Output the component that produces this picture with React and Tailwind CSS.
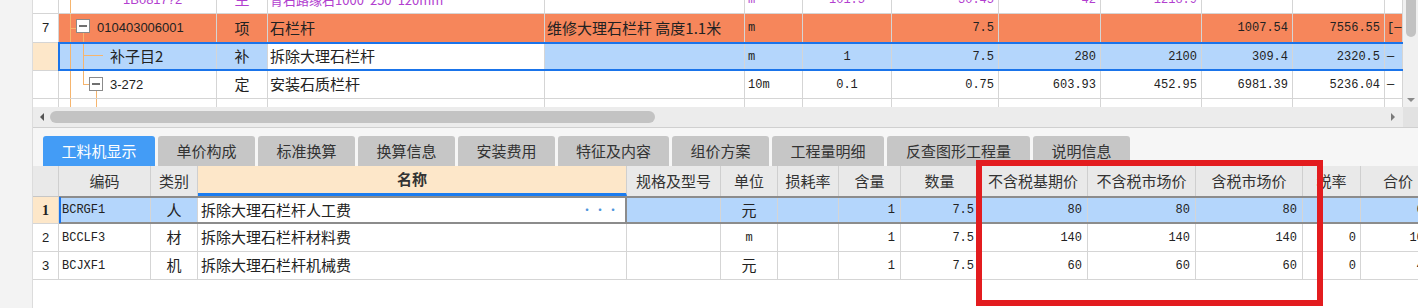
import React from 'react';

const CJK = "font-['Noto_Sans_CJK_SC','Liberation_Sans',sans-serif] text-[15px]";
const MONO = "font-['Liberation_Mono',monospace] text-[12px]";
const SANS = "font-['Liberation_Sans','Noto_Sans_CJK_SC',sans-serif] text-[13px]";
const PURPLE = 'text-[#b23fcf]';

// upper grid columns
const TOP = [
  { w: 'w-[26px]', a: 'justify-center', f: SANS },
  { w: 'w-[158px]', a: 'justify-start relative', f: SANS },
  { w: 'w-[51px]', a: 'justify-center', f: CJK },
  { w: 'w-[277px]', a: 'justify-start pl-[2px]', f: CJK },
  { w: 'w-[200px]', a: 'justify-start pl-[2px]', f: CJK },
  { w: 'w-[58px]', a: 'justify-start pl-[3px]', f: MONO },
  { w: 'w-[89px]', a: 'justify-center', f: MONO },
  { w: 'w-[107px]', a: 'justify-end pr-[4px]', f: MONO },
  { w: 'w-[102px]', a: 'justify-end pr-[4px]', f: MONO },
  { w: 'w-[101px]', a: 'justify-end pr-[4px]', f: MONO },
  { w: 'w-[91px]', a: 'justify-end pr-[4px]', f: MONO },
  { w: 'w-[92px]', a: 'justify-end pr-[4px]', f: MONO },
  { w: 'w-[18px]', a: 'justify-start pl-[2px]', f: MONO },
];

// lower grid columns
const LOW = [
  { w: 'w-[26px]', a: 'justify-center', f: SANS },
  { w: 'w-[92px]', a: 'justify-start pl-[3px]', f: MONO },
  { w: 'w-[47px]', a: 'justify-center', f: CJK },
  { w: 'w-[429px]', a: 'justify-start pl-[3px]', f: CJK },
  { w: 'w-[94px]', a: 'justify-start', f: CJK },
  { w: 'w-[57px]', a: 'justify-center', f: CJK },
  { w: 'w-[61px]', a: 'justify-end pr-[4px]', f: MONO },
  { w: 'w-[62px]', a: 'justify-end pr-[5px]', f: MONO },
  { w: 'w-[78px]', a: 'justify-end pr-[4px]', f: MONO },
  { w: 'w-[109px]', a: 'justify-end pr-[5px]', f: MONO },
  { w: 'w-[108px]', a: 'justify-end pr-[5px]', f: MONO },
  { w: 'w-[107px]', a: 'justify-end pr-[5px]', f: MONO },
  { w: 'w-[58px]', a: 'justify-end pr-[4px]', f: MONO },
  { w: 'w-[75px]', a: 'justify-end pr-[4px]', f: MONO },
];

const LINE = '#f6b56e';

function Box({ x, y }) {
  return (
    <g>
      <rect x={x + 0.5} y={y + 0.5} width="13" height="13" fill="#fff" stroke="#8b8b8b" />
      <line x1={x + 3} y1={y + 7} x2={x + 11} y2={y + 7} stroke="#333" strokeWidth="1.4" />
    </g>
  );
}

function Tree({ kind, h }) {
  return (
    <svg className="absolute left-0 top-0" width="158" height={h}>
      <line x1="11.5" y1="0" x2="11.5" y2={h} stroke={LINE} />
      {kind === 'item' && (
        <>
          <line x1="11" y1="14.5" x2="17" y2="14.5" stroke={LINE} />
          <line x1="24.5" y1="19" x2="24.5" y2={h} stroke={LINE} />
          <Box x={17} y={5} />
        </>
      )}
      {kind === 'sub' && (
        <>
          <line x1="24.5" y1="0" x2="24.5" y2={h} stroke={LINE} />
          <line x1="24" y1="12.5" x2="44" y2="12.5" stroke={LINE} />
        </>
      )}
      {kind === 'quota' && (
        <>
          <line x1="24.5" y1="0" x2="24.5" y2="14" stroke={LINE} />
          <line x1="24" y1="13.5" x2="30" y2="13.5" stroke={LINE} />
          <line x1="37.5" y1="20" x2="37.5" y2={h} stroke={LINE} />
          <Box x={30} y={6} />
        </>
      )}
      {kind === 'leaf' && <line x1="37.5" y1="0" x2="37.5" y2={h} stroke={LINE} />}
    </svg>
  );
}

function Row({ spec, cells, className = '', cellBg = [], children }) {
  return (
    <div className={`relative flex shrink-0 border-b border-[#d5d5d5] ${className}`}>
      {spec.map((c, i) => (
        <div
          key={i}
          className={`${c.w} ${c.a} ${c.f} ${cellBg[i] || ''} shrink-0 h-full border-r border-[#d5d5d5] flex items-center overflow-hidden whitespace-nowrap text-[#222]`}
        >
          {cells[i]}
        </div>
      ))}
      {children}
    </div>
  );
}

const TABS = [
  ['工料机显示', 'w-[112px]'],
  ['单价构成', 'w-[97px]'],
  ['标准换算', 'w-[97px]'],
  ['换算信息', 'w-[97px]'],
  ['安装费用', 'w-[97px]'],
  ['特征及内容', 'w-[111px]'],
  ['组价方案', 'w-[97px]'],
  ['工程量明细', 'w-[112px]'],
  ['反查图形工程量', 'w-[143px]'],
  ['说明信息', 'w-[97px]'],
];

const HEAD = ['', '编码', '类别', '名称', '规格及型号', '单位', '损耗率', '含量', '数量', '不含税基期价', '不含税市场价', '含税市场价', '税率', '合价'];

export default function App() {
  const blue = 'bg-[#b4d6fc]';
  const subBg = ['bg-[#fde7c9]', blue, blue, 'bg-white', blue, blue, blue, blue, blue, blue, blue, blue, blue];
  const r1Bg = ['bg-[#fde7c9]', blue, blue, 'bg-white', blue, blue, blue, blue, blue, blue, blue, blue, blue, blue];

  return (
    <div className="relative w-[1418px] h-[308px] flex overflow-hidden bg-white">
      <div className="w-[33px] shrink-0 h-full bg-[#f3f3f3] border-r border-[#dcdcdc]" />

      <div className="flex-1 flex flex-col min-w-0">
        {/* upper grid */}
        <div className="h-[107px] flex shrink-0 overflow-hidden">
          <div className="flex-1 flex flex-col overflow-hidden">
            <div className="h-[14px] shrink-0 overflow-hidden flex flex-col justify-end">
              <Row
                spec={TOP}
                className={`h-[28px] ${PURPLE}`}
                cells={[
                  '',
                  <><Tree kind="top" h={28} /><span className={`pl-[64px] ${PURPLE}`}>1B0817?2</span></>,
                  <span className={PURPLE}>主</span>,
                  <span className={`${PURPLE} text-[13px]`}>青石路缘石1000*250*120mm</span>,
                  '',
                  <span className={PURPLE}>m</span>,
                  <span className={PURPLE}>101.5</span>,
                  <span className={PURPLE}>30.45</span>,
                  <span className={PURPLE}>42</span>,
                  <span className={PURPLE}>1218.9</span>,
                  '',
                  '',
                  '',
                ]}
              />
            </div>

            <Row
              spec={TOP}
              className="h-[29px]"
              cellBg={['bg-white', 'bg-[#f6865b]', 'bg-[#f6865b]', 'bg-[#f6865b]', 'bg-[#f6865b]', 'bg-[#f6865b]', 'bg-[#f6865b]', 'bg-[#f6865b]', 'bg-[#f6865b]', 'bg-[#f6865b]', 'bg-[#f6865b]', 'bg-[#f6865b]', 'bg-[#f6865b]']}
              cells={[
                '7',
                <><Tree kind="item" h={28} /><span className="relative pl-[38px]">010403006001</span></>,
                '项',
                '石栏杆',
                '维修大理石栏杆 高度1.1米',
                'm',
                '',
                '7.5',
                '',
                '',
                '1007.54',
                '7556.55',
                '[—',
              ]}
            />

            <Row
              spec={TOP}
              className="h-[28px]"
              cellBg={subBg}
              cells={[
                '',
                <><Tree kind="sub" h={28} /><span className={`relative pl-[51px] ${CJK}`}>补子目2</span></>,
                '补',
                '拆除大理石栏杆',
                '',
                'm',
                '1',
                '7.5',
                '280',
                '2100',
                '309.4',
                '2320.5',
                '—',
              ]}
            >
              <div className="absolute left-[25px] right-0 top-[-1px] bottom-[-1px] border-y-2 border-l-2 border-[#1a74ea] pointer-events-none" />
            </Row>

            <Row
              spec={TOP}
              className="h-[28px]"
              cells={[
                '',
                <><Tree kind="quota" h={28} /><span className="relative pl-[51px]">3-272</span></>,
                '定',
                '安装石质栏杆',
                '',
                '10m',
                '0.1',
                '0.75',
                '603.93',
                '452.95',
                '6981.39',
                '5236.04',
                '—',
              ]}
            />

            <div className="h-[8px] shrink-0 overflow-hidden">
              <Row
                spec={TOP}
                className="h-[28px]"
                cells={[
                  '',
                  <Tree kind="leaf" h={28} />,
                  <span className={`${PURPLE} pt-[18px]`}>人</span>,
                  <span className={`${PURPLE} pt-[18px]`}>综合工日</span>,
                  '',
                  '',
                  '',
                  '',
                  '',
                  '',
                  '',
                  '',
                  '',
                ]}
              />
            </div>
          </div>

          {/* vertical scrollbar */}
          <div className="w-[15px] shrink-0 h-full bg-[#f0f0f0] flex flex-col items-center">
            <div className="w-[10px] h-[37px] rounded-b-full bg-[#c2c2c2]" />
            <div className="flex-1" />
            <svg width="10" height="6" className="mb-[4px]">
              <polygon points="1,1 9,1 5,5" fill="#8a8a8a" />
            </svg>
          </div>
        </div>

        {/* horizontal scrollbar */}
        <div className="h-[21px] shrink-0 flex items-center bg-[#ececec] border-b border-[#d0d0d0]">
          <div className="w-[17px] flex justify-center">
            <svg width="6" height="10">
              <polygon points="5,1 5,9 1,5" fill="#555" />
            </svg>
          </div>
          <div className="w-[605px] h-[12px] rounded-full bg-[#c3c3c3]" />
          <div className="flex-1" />
          <div className="w-[20px] flex justify-center">
            <svg width="6" height="10">
              <polygon points="1,1 1,9 5,5" fill="#7a7a7a" />
            </svg>
          </div>
          <div className="w-[15px] h-full bg-[#e2e2e2]" />
        </div>

        {/* tabs */}
        <div className="h-[38px] shrink-0 bg-[#f6f6f6] flex items-end pl-[10px] gap-[3px]">
          {TABS.map(([t, w], i) => (
            <div
              key={t}
              className={`${w} h-[30px] rounded-t-[3px] flex items-center justify-center ${CJK} ${i === 0 ? 'bg-[#439cf6] text-white' : 'bg-[#c6c6c6] text-[#333]'}`}
            >
              {t}
            </div>
          ))}
        </div>

        {/* lower grid */}
        <div className="flex flex-col overflow-hidden">
          <div className="h-[31px] shrink-0 flex bg-[#e9e9e9] border-b border-[#c6c6c6]">
            {LOW.map((c, i) => (
              <div
                key={i}
                className={`${c.w} ${CJK} shrink-0 h-full border-r border-[#cfcfcf] flex items-center justify-center whitespace-nowrap overflow-hidden text-[#333] ${i === 3 ? 'bg-[#fde7c9] font-bold border-b-[3px] border-b-[#1b7cf0]' : ''}`}
              >
                {HEAD[i]}
              </div>
            ))}
          </div>

          <Row
            spec={LOW}
            className="h-[27px]"
            cellBg={r1Bg}
            cells={[
              <span className="font-['Liberation_Serif',serif] font-bold text-[14px]">1</span>,
              'BCRGF1',
              '人',
              <div className="flex-1 flex items-center justify-between pr-[6px]">
                <span>拆除大理石栏杆人工费</span>
                <span className="text-[#4f95dc] text-[12px] tracking-[1px] leading-none">···</span>
              </div>,
              '',
              '元',
              '',
              '1',
              '7.5',
              '80',
              '80',
              '80',
              '',
              '60',
            ]}
          >
            <div className="absolute left-[26px] right-0 top-[-1px] bottom-[-1px] border-y-2 border-[#8c8c8c] pointer-events-none" />
            <div className="absolute left-[26px] w-[2px] top-0 bottom-0 bg-[#1a74ea] pointer-events-none" />
            <div className="absolute left-[592px] w-[2px] top-0 bottom-0 bg-[#8c8c8c] pointer-events-none" />
          </Row>

          <Row
            spec={LOW}
            className="h-[28px]"
            cells={['2', 'BCCLF3', '材', '拆除大理石栏杆材料费', '', <span className={MONO}>m</span>, '', '1', '7.5', '140', '140', '140', '0', '105']}
          />
          <Row
            spec={LOW}
            className="h-[28px]"
            cells={['3', 'BCJXF1', '机', '拆除大理石栏杆机械费', '', '元', '', '1', '7.5', '60', '60', '60', '0', '45']}
          />
        </div>
      </div>

      {/* red highlight frame */}
      <div className="absolute left-[976px] top-[160px] w-[347px] h-[146px] border-[6px] border-[#e31c1f] pointer-events-none" />
    </div>
  );
}
